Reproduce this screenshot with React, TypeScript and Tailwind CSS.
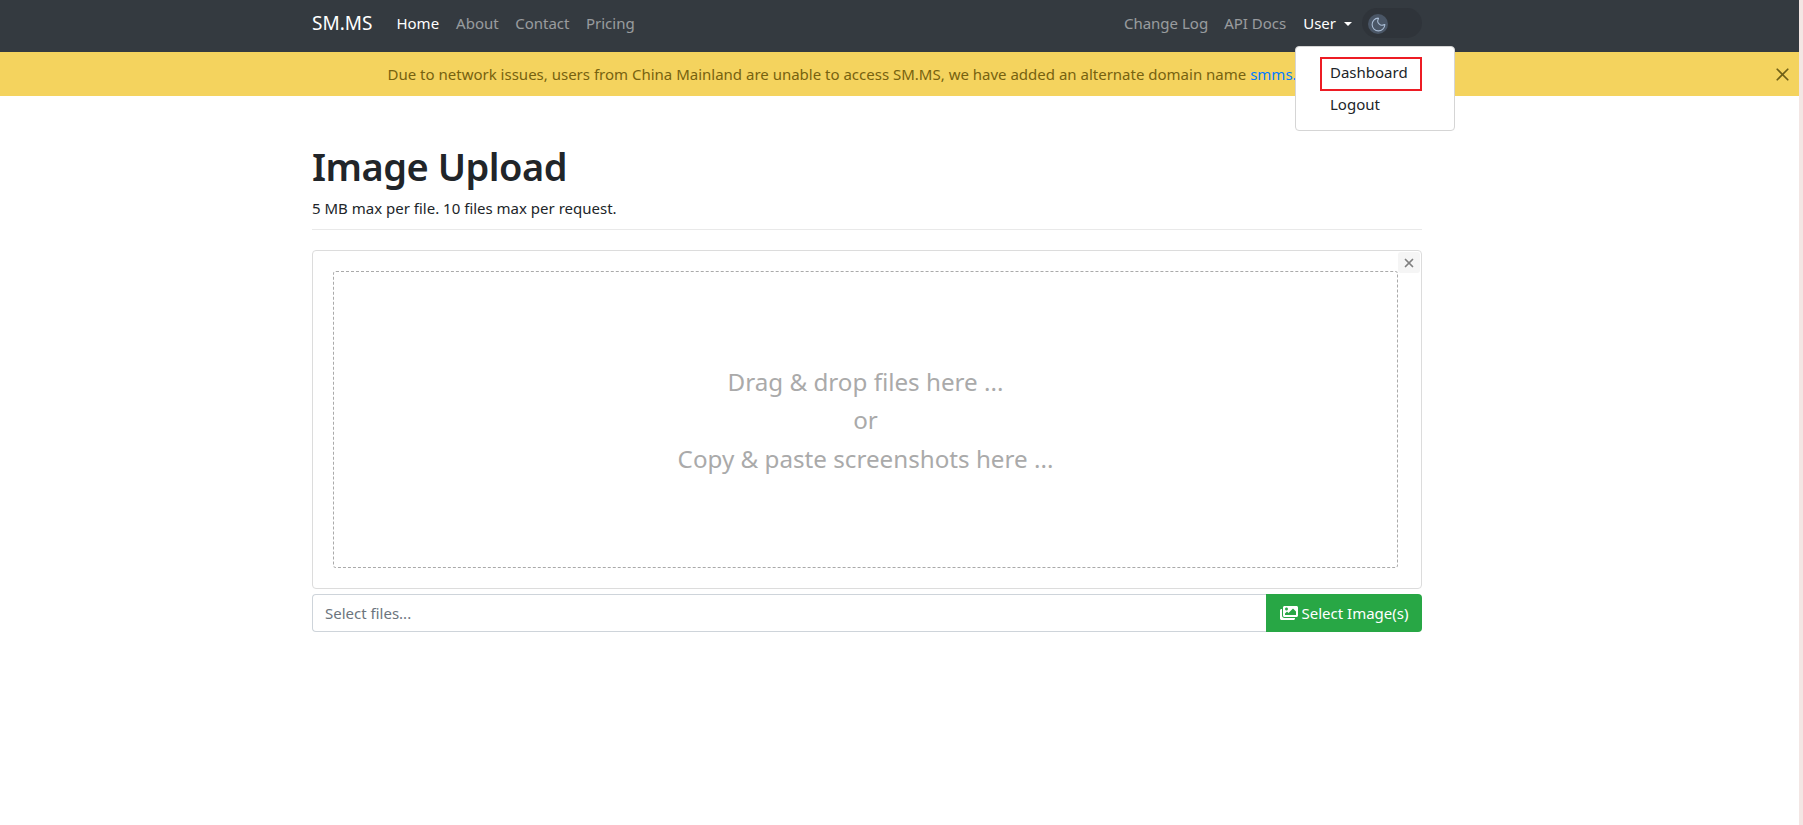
import { Moon, X } from 'lucide-react';
import { FaImages } from 'react-icons/fa';

const leftLinks = ['About', 'Contact', 'Pricing'];

export default function App() {
  return (
    <div className="relative min-h-[825px] bg-white font-['Noto_Sans',sans-serif] text-[15px] text-[#212529] overflow-hidden">
      <div className="mr-[4px]">
        {/* Navbar */}
        <nav className="h-[52px] bg-[#343a40] pl-[312px]">
          <div className="w-[1110px] h-[46px] flex items-center">
            <a className="text-[19px] text-white mr-[24px]">SM.MS</a>
            <a className="text-white mr-[17px]">Home</a>
            {leftLinks.map((l) => (
              <a key={l} className="text-white/50 mr-[16.5px]">{l}</a>
            ))}
            <div className="ml-auto flex items-center">
              <a className="text-white/50 mr-[16px]">Change Log</a>
              <a className="text-white/50 mr-[17px]">API Docs</a>
              <a className="text-white flex items-center mr-[10px]">
                User
                <span className="ml-[8px] mt-[1px] border-x-[4px] border-x-transparent border-t-[4px] border-t-white" />
              </a>
              <div className="w-[60px] h-[30px] rounded-full bg-[#2f343a] flex items-center pl-[6px]">
                <div className="w-[20px] h-[20px] mt-[2px] rounded-full bg-[#4a5666] flex items-center justify-center text-[#a9bcd4]">
                  <Moon size={17} strokeWidth={1.5} />
                </div>
              </div>
            </div>
          </div>
        </nav>

        {/* Alert banner */}
        <div className="relative h-[44px] bg-[#f4d35e] text-[#77620f] flex items-center justify-center">
          <span className="mr-[88px] whitespace-nowrap">
            Due to network issues, users from China Mainland are unable to access SM.MS, we have added an alternate domain name{' '}
            <a className="text-[#007bff]">smms.app</a>
          </span>
          <X size={21} strokeWidth={2} className="absolute right-[6px] top-[12px] text-[#6f5f16]" />
        </div>

        {/* Main */}
        <main className="w-[1110px] ml-[312px]">
          <h1 className="mt-[46px] text-[38px] leading-[48px] font-semibold tracking-[-0.5px]">Image Upload</h1>
          <p className="mt-[6px] leading-[24px]">5 MB max per file. 10 files max per request.</p>
          <hr className="mt-[9px] border-[#e9e9e9]" />

          <div className="relative mt-[20px] h-[339px] border border-[#dcdcdc] rounded-[4px] pt-[20px] pb-[20px] pl-[20px] pr-[23px]">
            <button className="absolute top-[1px] right-[1px] w-[22px] h-[21px] bg-[#f5f5f5] rounded-[3px] flex items-center justify-center text-[#808080]">
              <X size={14} strokeWidth={3} />
            </button>
            <div className="h-full pt-[2px] border border-dashed border-[#aaa] rounded-[3px] flex flex-col items-center justify-center text-[24.2px] leading-[38.5px] text-[#aaaaaa]">
              <span>Drag &amp; drop files here ...</span>
              <span>or</span>
              <span>Copy &amp; paste screenshots here ...</span>
            </div>
          </div>

          <div className="mt-[5px] h-[38px] flex">
            <div className="flex-1 border border-[#ced4da] border-r-0 rounded-l-[4px] flex items-center px-[12px] text-[#6c757d]">
              Select files...
            </div>
            <button className="w-[156px] bg-[#28a745] text-white rounded-r-[4px] flex items-center justify-center gap-[4px]">
              <FaImages size={18} />
              Select Image(s)
            </button>
          </div>
        </main>
      </div>

      {/* Dropdown menu */}
      <div className="absolute left-[1295px] top-[46px] w-[160px] h-[85px] bg-white border border-[#d5d5d5] rounded-[4px] pt-[10px]">
        <div className="ml-[24px] w-[102px] h-[34px] border-2 border-[#ed1c24] flex items-center pl-[8px] pb-[3px]">Dashboard</div>
        <div className="ml-[34px] mt-[1px] leading-[24px]">Logout</div>
      </div>

      {/* Window edge */}
      <div className="absolute right-0 top-0 bottom-0 w-[4px] bg-[#f3e6e4]" />
    </div>
  );
}
